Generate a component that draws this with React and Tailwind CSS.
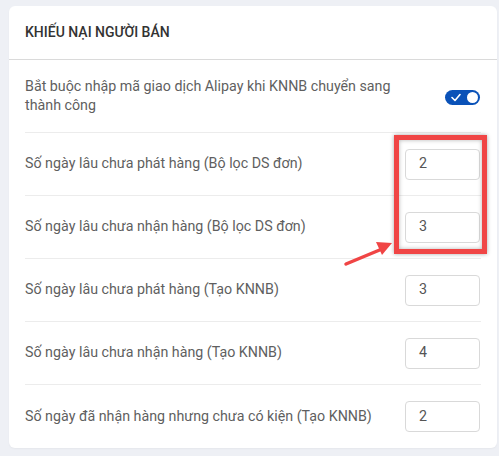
import React from 'react';

const rows = [
  { label: 'Số ngày lâu chưa phát hàng (Bộ lọc DS đơn)', value: '2' },
  { label: 'Số ngày lâu chưa nhận hàng (Bộ lọc DS đơn)', value: '3' },
  { label: 'Số ngày lâu chưa phát hàng (Tạo KNNB)', value: '3' },
  { label: 'Số ngày lâu chưa nhận hàng (Tạo KNNB)', value: '4' },
  { label: 'Số ngày đã nhận hàng nhưng chưa có kiện (Tạo KNNB)', value: '2' },
];

function Toggle() {
  return (
    <div className="relative w-[35px] h-[15px] rounded-full bg-[#0a52b8] flex items-center">
      <svg className="absolute left-[6px] top-[3px]" width="10" height="9" viewBox="0 0 10 9">
        <path d="M1 4.5 L4 7.5 L9 1.5" fill="none" stroke="white" strokeWidth="1.6" strokeLinecap="round" strokeLinejoin="round" />
      </svg>
      <div className="absolute right-[2px] top-[2px] w-[11px] h-[11px] rounded-full bg-white" />
    </div>
  );
}

export default function App() {
  return (
    <div
      className="relative min-h-screen bg-[#eef0f5] pt-[6px] pl-[9px]"
      style={{ fontFamily: 'Roboto, "Noto Sans", sans-serif' }}
    >
      <div className="w-[488px] rounded-[6px] bg-white shadow-[0_1px_2px_rgba(0,0,0,0.04)]">
        <div className="h-[54px] px-[16px] flex items-center border-b border-[#dadada]">
          <h2 className="text-[14px] font-medium text-[#333]">KHIẾU NẠI NGƯỜI BÁN</h2>
        </div>
        <div className="mx-[16px]">
          <div className="h-[73px] flex items-center justify-between border-b border-[#ececec]">
            <p className="w-[375px] text-[14.25px] leading-[19px] text-[#5f5f5f]">
              Bắt buộc nhập mã giao dịch Alipay khi KNNB chuyển sang thành công
            </p>
            <div className="pr-[1px] pt-[2px]">
              <Toggle />
            </div>
          </div>
          {rows.map((row, i) => (
            <div
              key={i}
              className={
                'h-[63px] flex items-center justify-between ' +
                (i < rows.length - 1 ? 'border-b border-[#ececec]' : '')
              }
            >
              <span className="text-[14.25px] text-[#5f5f5f]">{row.label}</span>
              <div className="mr-[1px] w-[75px] h-[31px] rounded-[4px] border border-[#d9d9d9] flex items-center pl-[13px] text-[14.25px] text-[#555]">
                {row.value}
              </div>
            </div>
          ))}
        </div>
      </div>

      {/* highlight annotation */}
      <div className="absolute left-[394px] top-[135px] w-[93px] h-[119px] border-[5px] border-[#f04545] shadow-[0_0_4px_rgba(0,0,0,0.35),inset_0_0_4px_rgba(0,0,0,0.3)]" />
      <svg className="absolute left-[340px] top-[236px]" width="56" height="34" viewBox="0 0 56 34">
        <line x1="6" y1="28" x2="42" y2="13" stroke="#f04545" strokeWidth="3.5" strokeLinecap="round" />
        <polygon points="52,7 36,6 42,19" fill="#f04545" />
      </svg>
    </div>
  );
}
